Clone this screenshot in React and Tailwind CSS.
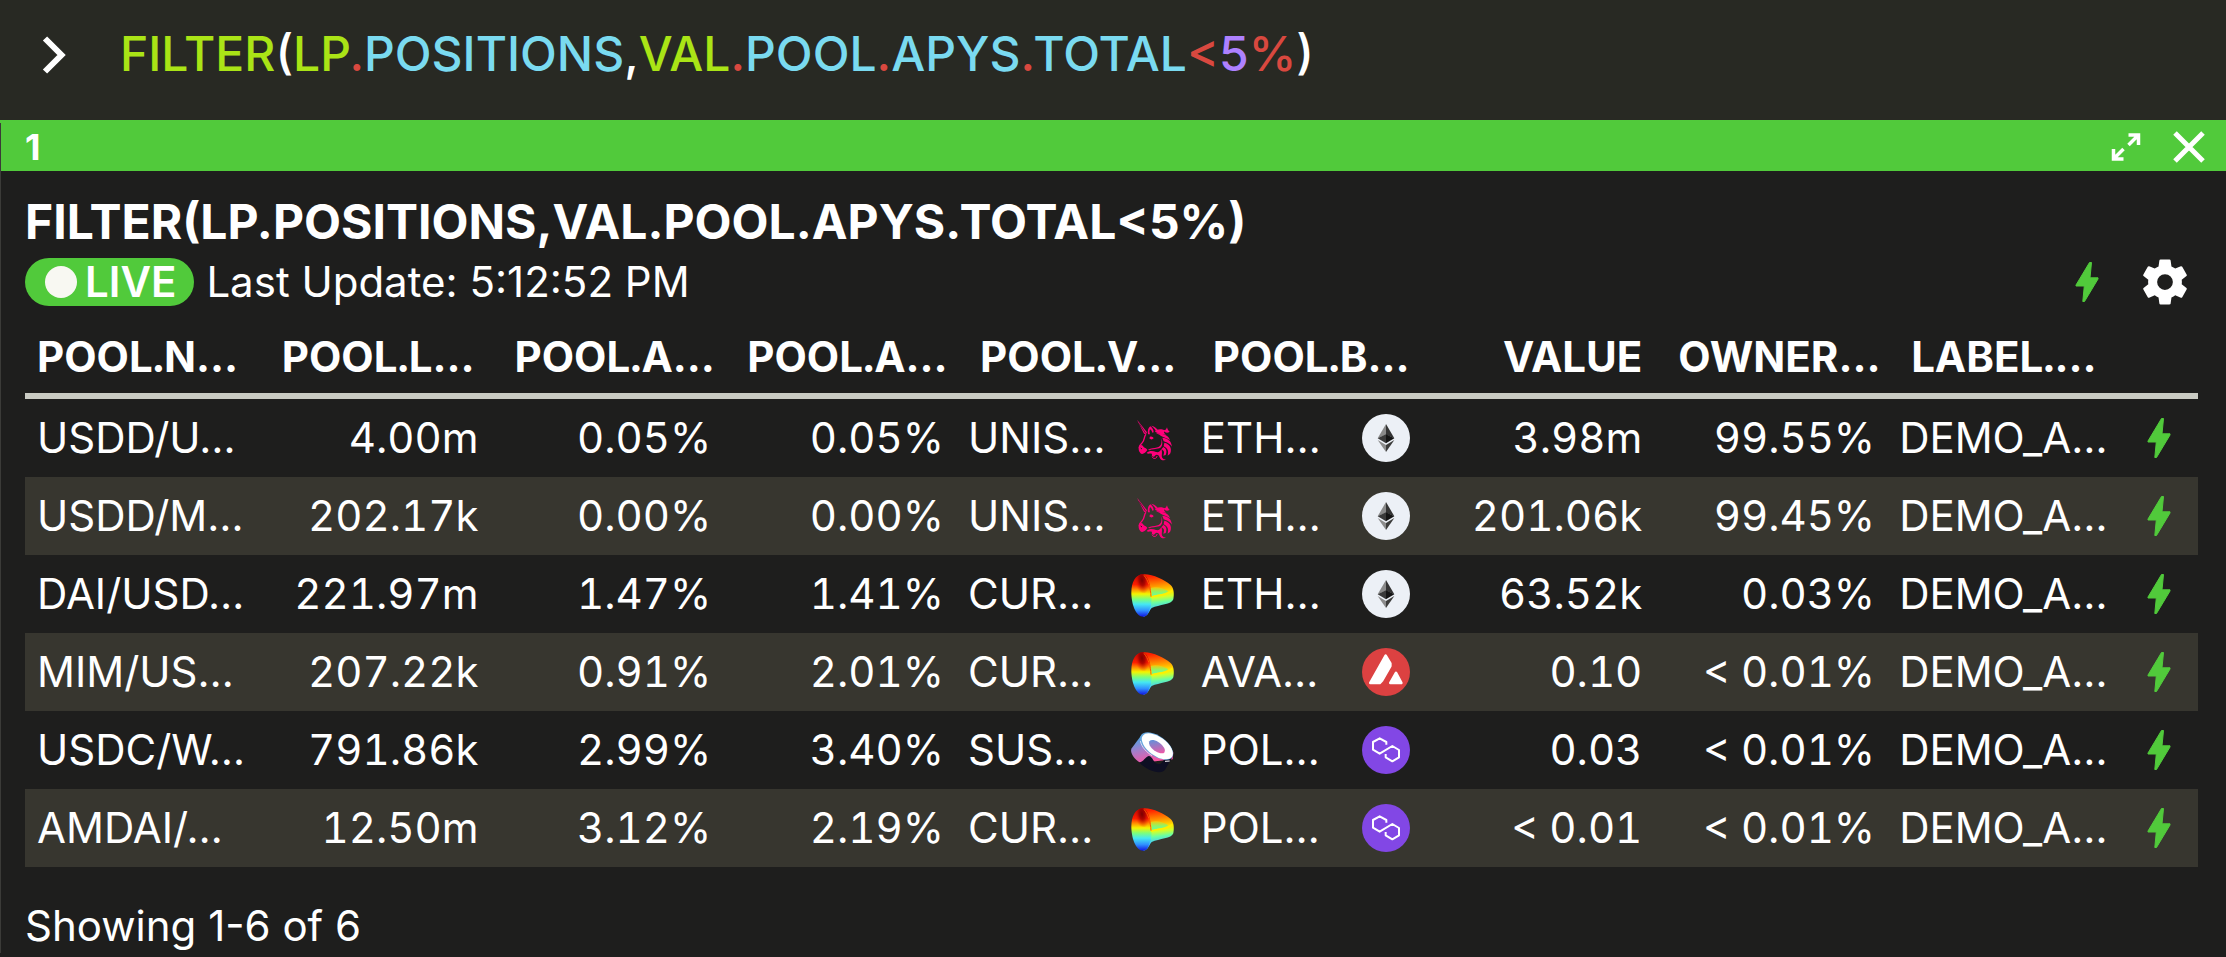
import { useState } from 'react';

const TOKENS = [
  ['FILTER', 'text-[#aae416]'],
  ['(', 'text-white'],
  ['LP', 'text-[#aae416]'],
  ['.', 'text-[#d9483f]'],
  ['POSITIONS', 'text-[#7adaf0]'],
  [',', 'text-white'],
  ['VAL', 'text-[#aae416]'],
  ['.', 'text-[#d9483f]'],
  ['POOL', 'text-[#7adaf0]'],
  ['.', 'text-[#d9483f]'],
  ['APYS', 'text-[#7adaf0]'],
  ['.', 'text-[#d9483f]'],
  ['TOTAL', 'text-[#7adaf0]'],
  ['<', 'text-[#d9483f]'],
  ['5', 'text-[#ae81ff]'],
  ['%', 'text-[#d9483f]'],
  [')', 'text-white'],
];

const FORMULA = TOKENS.map(([text]) => text).join('');

const COLUMNS = [
  { label: 'POOL.N…' },
  { label: 'POOL.L…' },
  { label: 'POOL.A…' },
  { label: 'POOL.A…' },
  { label: 'POOL.V…' },
  { label: 'POOL.B…' },
  { label: 'VALUE', right: true },
  { label: 'OWNER…' },
  { label: 'LABEL.…' },
];

const ROWS = [
  { pool: 'USDD/U…', liquidity: '4.00m', apy: '0.05%', total: '0.05%', venue: 'UNIS…', VenueIcon: Uniswap, chain: 'ETH…', ChainIcon: Ethereum, value: '3.98m', owner: '99.55%', label: 'DEMO_A…' },
  { pool: 'USDD/M…', liquidity: '202.17k', apy: '0.00%', total: '0.00%', venue: 'UNIS…', VenueIcon: Uniswap, chain: 'ETH…', ChainIcon: Ethereum, value: '201.06k', owner: '99.45%', label: 'DEMO_A…' },
  { pool: 'DAI/USD…', liquidity: '221.97m', apy: '1.47%', total: '1.41%', venue: 'CUR…', VenueIcon: Curve, chain: 'ETH…', ChainIcon: Ethereum, value: '63.52k', owner: '0.03%', label: 'DEMO_A…' },
  { pool: 'MIM/US…', liquidity: '207.22k', apy: '0.91%', total: '2.01%', venue: 'CUR…', VenueIcon: Curve, chain: 'AVA…', ChainIcon: Avalanche, value: '0.10', owner: '< 0.01%', label: 'DEMO_A…' },
  { pool: 'USDC/W…', liquidity: '791.86k', apy: '2.99%', total: '3.40%', venue: 'SUS…', VenueIcon: Sushi, chain: 'POL…', ChainIcon: Polygon, value: '0.03', owner: '< 0.01%', label: 'DEMO_A…' },
  { pool: 'AMDAI/…', liquidity: '12.50m', apy: '3.12%', total: '2.19%', venue: 'CUR…', VenueIcon: Curve, chain: 'POL…', ChainIcon: Polygon, value: '< 0.01', owner: '< 0.01%', label: 'DEMO_A…' },
];

function Uniswap() {
  return (
    <svg viewBox="27 12 144 144" className="size-12 shrink-0" fill="#ff007a" aria-hidden="true">
      {/* horn and ears */}
      <path d="M51 29 L81 67 L78 73 L72 71 Z" />
      <path d="M57 40 L77 70" stroke="#1e1e1d" strokeWidth="2" />
      <path d="M84 73 C82 62 85 53 91 49 C97 54 101 60 101 67 L97 68 C95 62 93 59 90 58 C88 63 88 68 90 73 Z" />
      <path d="M93 47 C102 48 109 53 113 60 L107 62 C104 55 99 51 93 47 Z" />
      {/* face */}
      <path d="M78 73 C71 80 75 91 66 99 C61 103 58 108 58 114" fill="none" stroke="#ff007a" strokeWidth="4" />
      <path d="M90 80 C94 78 99 80 101 85 C97 90 91 89 88 85 Z" />
      <path d="M57 107 C64 103 68 105 71 111 C75 114 80 115 82 120 C77 128 69 134 64 131 C57 127 54 116 57 107 Z" />
      <path d="M62 114 L66 117" stroke="#1e1e1d" strokeWidth="3" />
      <path d="M84 119 C93 114 101 116 113 112 C125 108 127 94 122 83 C130 96 128 110 118 115 C106 118 96 117 88 121 Z" />
      {/* mane */}
      <path d="M105 65 C110 55 129 57 138 63 C130 61 130 68 138 74 C125 72 116 72 105 65 Z" />
      <path d="M128 59 C134 64 138 60 141 52 C143 58 144 62 149 65 C141 71 135 68 128 59 Z" />
      <path d="M107 68 C131 71 147 76 150 91 C141 83 129 82 122 77 C118 73 112 71 107 68 Z" />
      <path d="M127 83 C143 84 154 92 156 110 C148 98 137 97 131 94 Z" />
      <path d="M133 98 C148 102 157 113 151 130 C148 134 145 136 143 137 C147 121 142 115 131 109 Z" />
      <path d="M130 111 C140 117 141 125 137 135 L130 137 C134 128 133 122 124 118 Z" />
      {/* beard */}
      <path d="M80 129 C87 122 98 122 108 126 C116 128 121 123 124 117 C129 130 122 138 128 145 C131 149 135 149 139 148 C131 155 120 149 118 140 C116 133 108 132 105 137 C102 143 93 140 96 132 C90 128 85 134 80 129 Z" />
      <path d="M96 140 C99 148 111 147 111 138" fill="none" stroke="#ff007a" strokeWidth="3" />
    </svg>
  );
}

function Curve() {
  return (
    <svg viewBox="27 12 144 144" className="size-12 shrink-0" aria-hidden="true">
      <defs>
        <linearGradient id="curve-loop" x1="0" y1="25" x2="0" y2="153" gradientUnits="userSpaceOnUse">
          <stop offset="0" stopColor="#b80000" />
          <stop offset="0.24" stopColor="#ff1e00" />
          <stop offset="0.36" stopColor="#ff9500" />
          <stop offset="0.46" stopColor="#f4f400" />
          <stop offset="0.58" stopColor="#7dff7a" />
          <stop offset="0.7" stopColor="#45e8f2" />
          <stop offset="0.85" stopColor="#2f8fff" />
          <stop offset="1" stopColor="#1010e0" />
        </linearGradient>
        <linearGradient id="curve-band" x1="110" y1="28" x2="122" y2="128" gradientUnits="userSpaceOnUse">
          <stop offset="0" stopColor="#ff1e00" />
          <stop offset="0.28" stopColor="#ff8a00" />
          <stop offset="0.52" stopColor="#ffe600" />
          <stop offset="0.65" stopColor="#d2ff2a" />
          <stop offset="0.8" stopColor="#6bffa0" />
          <stop offset="1" stopColor="#3fc8ff" />
        </linearGradient>
        <radialGradient id="curve-dark" cx="0" cy="0" r="1" gradientUnits="userSpaceOnUse" gradientTransform="translate(66 42) rotate(-8) scale(22 42)">
          <stop offset="0" stopColor="#7a0000" />
          <stop offset="0.4" stopColor="#9c0000" stopOpacity="0.8" />
          <stop offset="1" stopColor="#ff1e00" stopOpacity="0" />
        </radialGradient>
        <linearGradient id="curve-hole" x1="0" y1="62" x2="0" y2="94" gradientUnits="userSpaceOnUse">
          <stop offset="0" stopColor="#ffc400" />
          <stop offset="0.5" stopColor="#8cf56a" />
          <stop offset="1" stopColor="#5cffb0" />
        </linearGradient>
      </defs>
      <path d="M70 25 C100 24 132 42 151 56 C162 65 163 83 160 100 C155 116 118 116 95 126 C88 132 86 150 70 152 Z" fill="url(#curve-band)" />
      <path d="M70 25 C46 25 34 49 34 80 C34 111 46 152 70 152 C86 151 86 132 92 122 C96 106 96 82 91 62 C87 44 80 30 70 25 Z" fill="url(#curve-loop)" />
      <path d="M70 25 C46 25 36 49 36 76 L92 84 C92 46 80 30 70 25 Z" fill="url(#curve-dark)" />
      <path d="M92 66 C108 60 132 66 145 76 C132 86 110 85 96 90 Z" fill="url(#curve-hole)" />
      <path d="M93 94 C112 84 140 92 157 73" fill="none" stroke="#fff000" strokeWidth="5" />
      <path d="M72 28 C84 42 92 66 93 92" fill="none" stroke="#ff5a00" strokeWidth="3" />
    </svg>
  );
}

function Sushi() {
  return (
    <svg viewBox="27 12 144 144" className="size-12 shrink-0" aria-hidden="true">
      <defs>
        <linearGradient id="sushi-roll" x1="70" y1="40" x2="92" y2="122" gradientUnits="userSpaceOnUse">
          <stop offset="0" stopColor="#4ba5e4" />
          <stop offset="0.5" stopColor="#a87bc8" />
          <stop offset="1" stopColor="#fa52a0" />
        </linearGradient>
        <linearGradient id="sushi-core" x1="92" y1="58" x2="128" y2="92" gradientUnits="userSpaceOnUse">
          <stop offset="0" stopColor="#5b93dc" />
          <stop offset="1" stopColor="#f455a4" />
        </linearGradient>
      </defs>
      <path d="M64 40 L34 80 C30 92 42 112 62 123 L158 112 L160 90 Z" fill="url(#sushi-roll)" />
      <path d="M56 120 C68 124 76 104 86 102 C98 102 100 124 114 126 C128 128 128 112 138 110 C148 108 154 112 160 100 L136 142 C126 158 88 152 56 120 Z" fill="#0e0f23" />
      <ellipse cx="110" cy="72" rx="57" ry="30" transform="rotate(36 110 72)" fill="#64a5dc" />
      <ellipse cx="112" cy="73" rx="54" ry="28" transform="rotate(36 112 73)" fill="#ffffff" />
      <ellipse cx="111" cy="74" rx="28" ry="14" transform="rotate(36 111 74)" fill="url(#sushi-core)" />
      <path d="M61 57 C65 76 80 91 96 101" fill="none" stroke="#ffffff" strokeWidth="2" />
      <path d="M135 118 L149 117" stroke="#ffffff" strokeWidth="3" />
    </svg>
  );
}

function Ethereum() {
  return (
    <svg viewBox="0 0 144 144" className="size-12 shrink-0" aria-hidden="true">
      <circle cx="72" cy="72" r="72" fill="#ecf0f6" />
      <path d="M72 30 L47 73 L72 62 Z" fill="#8a8a8a" />
      <path d="M72 30 L97 73 L72 62 Z" fill="#343434" />
      <path d="M72 61 L47 73 L72 88 Z" fill="#393939" />
      <path d="M72 61 L97 73 L72 88 Z" fill="#141414" />
      <path d="M47 78 L72 93 V114 Z" fill="#8c8c8c" />
      <path d="M97 78 L72 93 V114 Z" fill="#3c3c3b" />
    </svg>
  );
}

function Avalanche() {
  return (
    <svg viewBox="0 0 144 144" className="size-12 shrink-0" aria-hidden="true">
      <circle cx="72" cy="72" r="72" fill="#dc4141" />
      <g fill="#ffffff" stroke="#ffffff" strokeWidth="8" strokeLinejoin="round">
        <path d="M25 105 L71 23 L85 46 V54 L60 98 L53 105 Z" />
        <path d="M102 75 L118 105 H85 Z" />
      </g>
    </svg>
  );
}

function Polygon() {
  return (
    <svg viewBox="0 0 144 144" className="size-12 shrink-0" aria-hidden="true">
      <circle cx="72" cy="72" r="72" fill="#8247e5" />
      <path
        d="M73 56 V48 L53 37 L33 48 V71 L53 83 L91 60 L111 72 V94 L91 106 L71 94 V84"
        fill="none"
        stroke="#ffffff"
        strokeWidth="6"
        strokeLinejoin="round"
      />
    </svg>
  );
}

function Bolt() {
  return (
    <svg viewBox="0 0 54 54" className="size-[54px]" fill="#51ca3b" stroke="#51ca3b" strokeLinejoin="round" aria-hidden="true">
      <path d="M29.5 7.5 H31.5 L30 22.8 H38 V24 L24.5 46.5 H22.8 L24.3 31 H16 V30 Z" />
    </svg>
  );
}

function Cog() {
  return (
    <svg viewBox="0 0 24 24" className="size-[54px]" fill="currentColor" aria-hidden="true">
      <path d="M12,15.5A3.5,3.5 0 0,1 8.5,12A3.5,3.5 0 0,1 12,8.5A3.5,3.5 0 0,1 15.5,12A3.5,3.5 0 0,1 12,15.5M19.43,12.97C19.47,12.65 19.5,12.33 19.5,12C19.5,11.67 19.47,11.34 19.43,11L21.54,9.37C21.73,9.22 21.78,8.95 21.66,8.73L19.66,5.27C19.54,5.05 19.27,4.96 19.05,5.05L16.56,6.05C16.04,5.66 15.5,5.32 14.87,5.07L14.5,2.42C14.46,2.18 14.25,2 14,2H10C9.75,2 9.54,2.18 9.5,2.42L9.13,5.07C8.5,5.32 7.96,5.66 7.44,6.05L4.95,5.05C4.73,4.96 4.46,5.05 4.34,5.27L2.34,8.73C2.21,8.95 2.27,9.22 2.46,9.37L4.57,11C4.53,11.34 4.5,11.67 4.5,12C4.5,12.33 4.53,12.65 4.57,12.97L2.46,14.63C2.27,14.78 2.21,15.05 2.34,15.27L4.34,18.73C4.46,18.95 4.73,19.03 4.95,18.95L7.44,17.94C7.96,18.34 8.5,18.68 9.13,18.93L9.5,21.58C9.54,21.82 9.75,22 10,22H14C14.25,22 14.46,21.82 14.5,21.58L14.87,18.93C15.5,18.67 16.04,18.34 16.56,17.94L19.05,18.95C19.27,19.03 19.54,18.95 19.66,18.73L21.66,15.27C21.78,15.05 21.73,14.78 21.54,14.63L19.43,12.97Z" />
    </svg>
  );
}

function QueryBar() {
  const [value, setValue] = useState(FORMULA);

  return (
    <div className="flex items-center gap-11 bg-[#282923] pt-[18px] pb-[30px] pl-9">
      <svg viewBox="0 0 40 40" className="size-10 shrink-0" fill="none" stroke="#ffffff" strokeWidth="6" aria-hidden="true">
        <path d="M9 4.500 L25.500 21 L9 37.500" />
      </svg>
      <div className="relative flex-1 text-5xl leading-[72px] font-medium">
        <div className="whitespace-pre" aria-hidden="true">
          {value === FORMULA
            ? TOKENS.map(([text, color], i) => (
                <span key={i} className={color}>{text}</span>
              ))
            : value}
        </div>
        <input
          type="text"
          aria-label="Formula"
          spellCheck={false}
          value={value}
          onChange={(e) => setValue(e.target.value)}
          className="absolute inset-0 w-full bg-transparent text-transparent caret-white outline-none"
        />
      </div>
    </div>
  );
}

function ResultTable() {
  return (
    <table className="mt-3 w-full table-fixed border-separate border-spacing-0 tabular-nums">
      <thead>
        <tr>
          {COLUMNS.map(({ label, right }, i) => (
            <th
              key={i}
              className={`h-[78px] border-b-[6px] border-[#cacbc3] py-0 pr-3 font-bold whitespace-nowrap ${i === 0 ? 'pl-3' : 'pl-6'} ${right ? 'text-right' : 'text-left'}`}
            >
              {label}
            </th>
          ))}
          <th className="w-[78px] border-b-[6px] border-[#cacbc3] p-0" aria-label="Actions" />
        </tr>
      </thead>
      <tbody className="whitespace-nowrap">
        {ROWS.map(({ VenueIcon, ChainIcon, ...row }) => (
          <tr key={row.pool} className="even:bg-[#37362f]">
            <td className="h-[78px] px-3">{row.pool}</td>
            <td className="px-3 text-right">{row.liquidity}</td>
            <td className="px-3 text-right">{row.apy}</td>
            <td className="px-3 text-right">{row.total}</td>
            <td className="px-3">
              <div className="flex items-center justify-between">
                {row.venue}
                <VenueIcon />
              </div>
            </td>
            <td className="px-3">
              <div className="flex items-center justify-between">
                {row.chain}
                <ChainIcon />
              </div>
            </td>
            <td className="px-3 text-right">{row.value}</td>
            <td className="px-3 text-right">{row.owner}</td>
            <td className="px-3">{row.label}</td>
            <td className="px-3">
              <button type="button" aria-label="Row actions" className="block">
                <Bolt />
              </button>
            </td>
          </tr>
        ))}
      </tbody>
    </table>
  );
}

export default function App() {
  return (
    <div className="min-h-screen bg-[#1e1e1d] font-['Inter',sans-serif] text-white">
      <QueryBar />
      <section className="border-t-[3px] border-[#51ca3b]">
        <div className="border-l border-[#3b3b38]">
          <header className="flex h-12 items-center bg-[#51ca3b] pr-[10px] pl-6">
            <span className="flex-1 text-4xl font-bold">1</span>
            <button type="button" aria-label="Expand">
              <svg viewBox="0 0 36 36" className="size-9" fill="none" stroke="currentColor" strokeWidth="3.500" aria-hidden="true">
                <path d="M20.500 6 H30.500 V16 M30 6.500 L20.500 16" />
                <path d="M5.500 20 V30 H15.500 M6 29.500 L15.500 20" />
              </svg>
            </button>
            <button type="button" aria-label="Close" className="ml-[18px]">
              <svg viewBox="0 0 54 54" className="size-[54px]" fill="none" stroke="currentColor" strokeWidth="5" aria-hidden="true">
                <path d="M13 13 L41 41 M41 13 L13 41" />
              </svg>
            </button>
          </header>
          <div className="pt-[18px] pr-7 pl-6 text-[42px] leading-[54px]">
            <h1 className="text-5xl leading-[66px] font-bold">{FORMULA}</h1>
            <div className="flex items-center">
              <span className="flex h-12 items-center gap-2 rounded-full bg-[#51ca3b] pr-[18px] pl-5 font-semibold">
                <span className="size-8 rounded-full bg-[#f8f8f2]" />
                LIVE
              </span>
              <span className="ml-3 flex-1">Last Update: 5:12:52 PM</span>
              <div className="flex gap-6 pr-1.5">
                <button type="button" aria-label="Actions">
                  <Bolt />
                </button>
                <button type="button" aria-label="Settings">
                  <Cog />
                </button>
              </div>
            </div>
            <ResultTable />
            <p className="mt-8">Showing 1-6 of 6</p>
          </div>
        </div>
      </section>
    </div>
  );
}
